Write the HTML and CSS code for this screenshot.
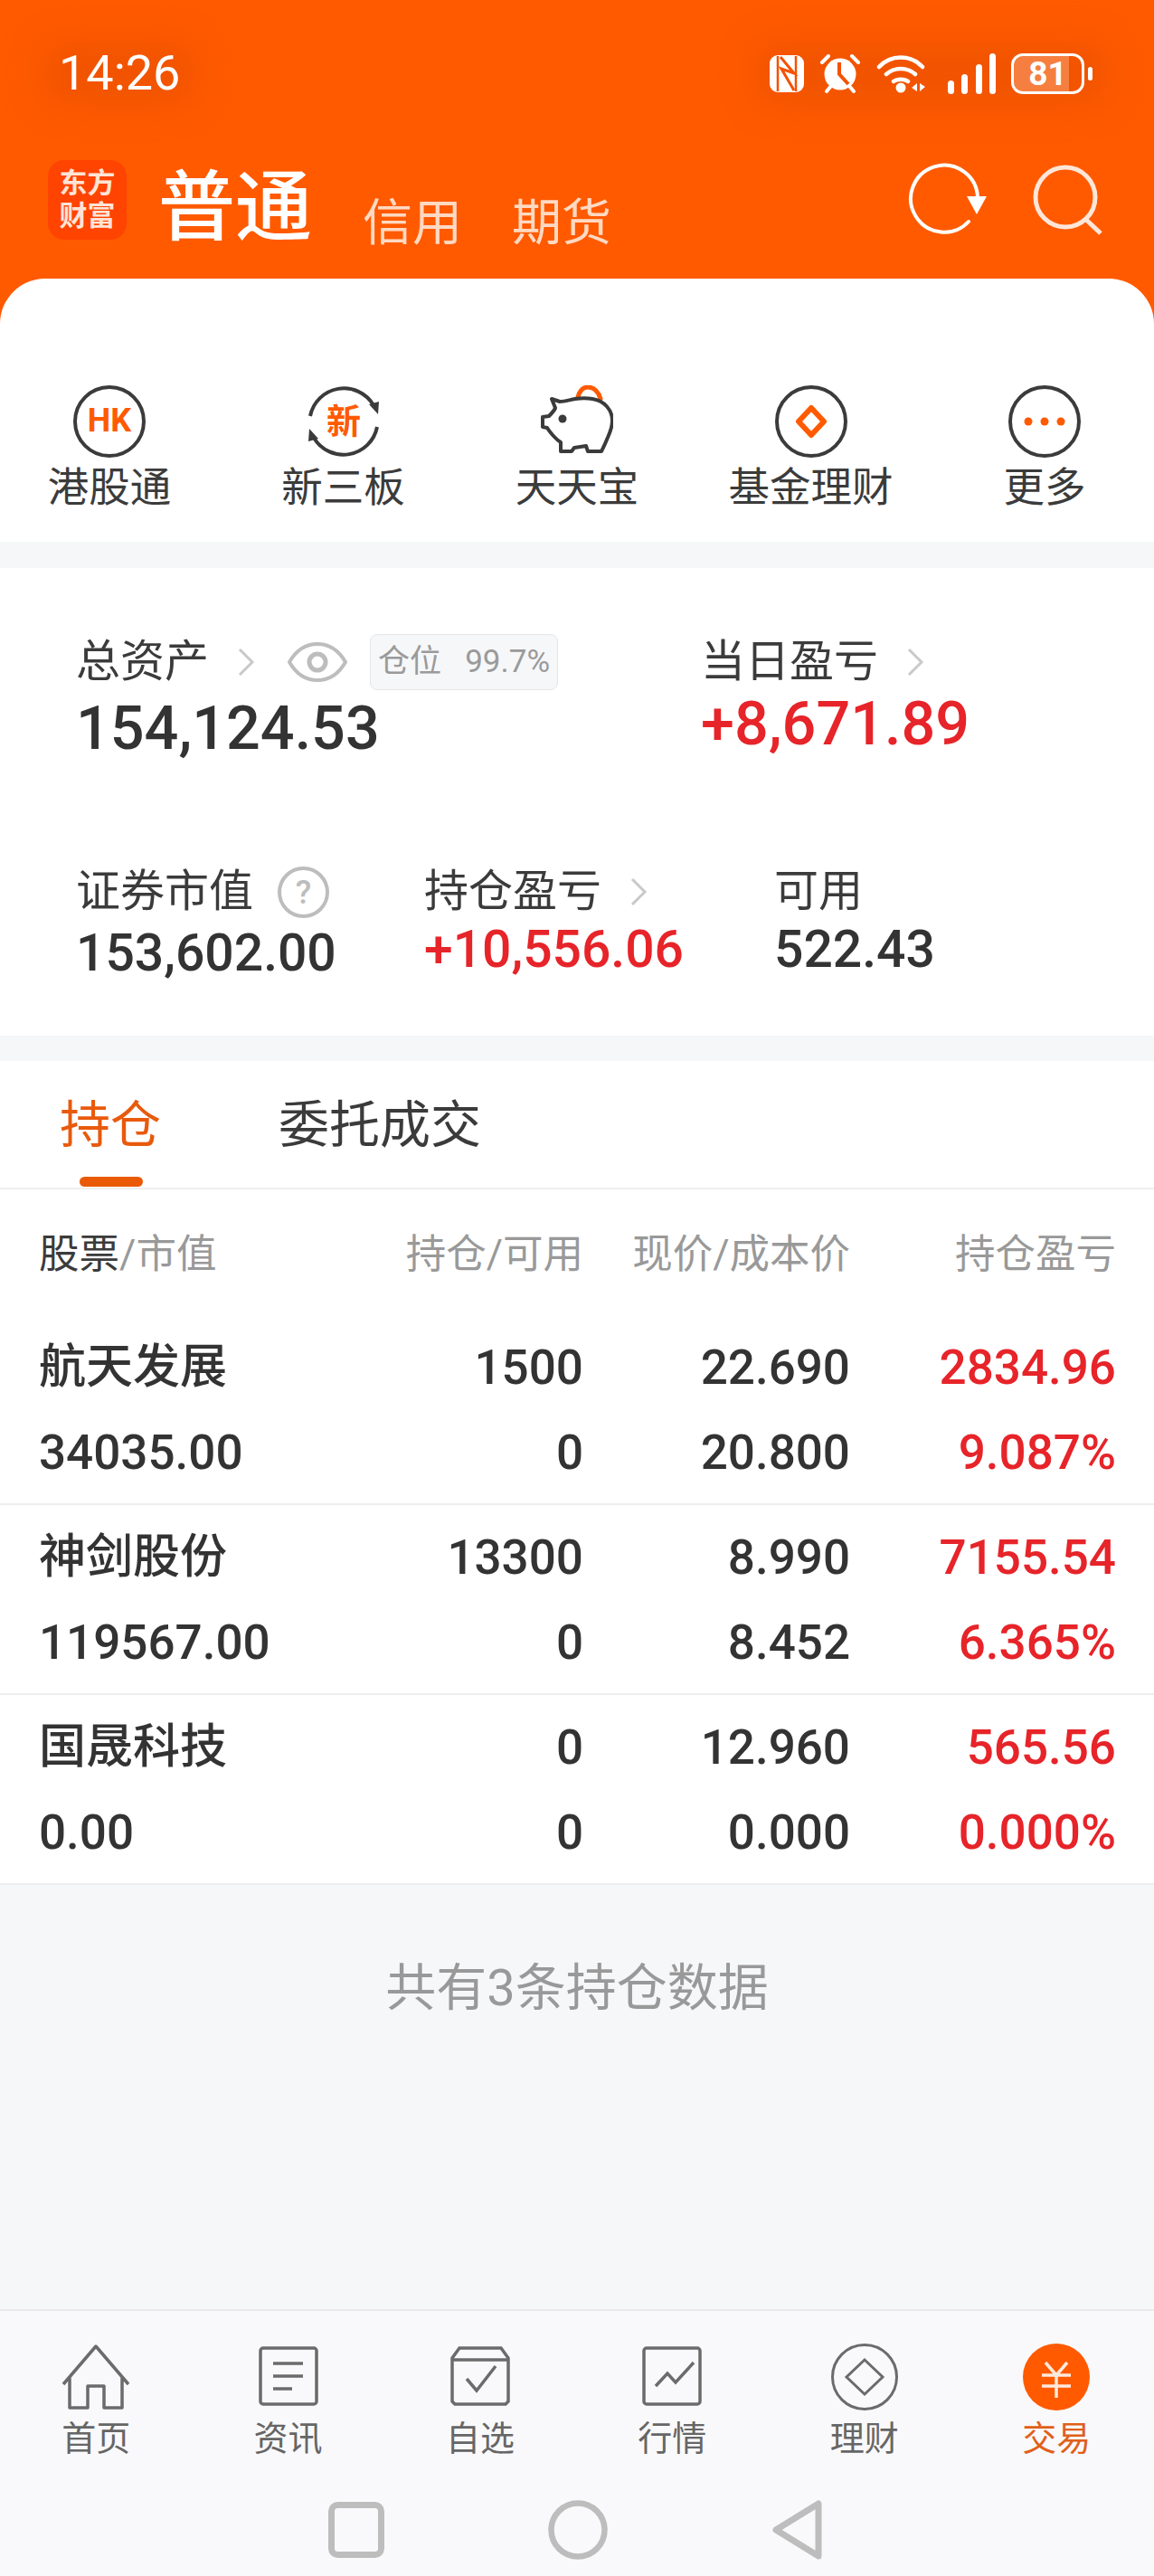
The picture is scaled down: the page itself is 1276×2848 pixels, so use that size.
FILE: index.html
```html
<!DOCTYPE html>
<html lang="zh-CN">
<head>
    <meta charset="UTF-8">
    <title>交易</title>
    <link rel="stylesheet" href="styles.css">
</head>
<body>
    <header class="top">
        <div class="statusbar">
            <span class="clock">14:26</span>
            <div class="status-icons">
                <svg width="38" height="41" viewBox="0 0 38 41"><rect width="38" height="41" rx="9" fill="#fff"/><path d="M9 1v39M29 1v39" stroke="#f35200" stroke-width="2.500"/><path d="M12 2l15 18-14-5 14 24" fill="none" stroke="#f35200" stroke-width="3"/></svg>
                <svg width="46" height="44" viewBox="0 0 46 44"><circle cx="23" cy="23" r="17.500" fill="#fff"/><path d="M22 10v13l10 11" fill="none" stroke="#f35200" stroke-width="4"/><path d="M3 10l7-7M43 10l-7-7M8 42l5-6M38 42l-5-6" stroke="#fff" stroke-width="4" stroke-linecap="round"/></svg>
                <svg class="wifi" width="54" height="44" viewBox="0 0 54 44"><path d="M3 15c13-14 35-14 48 0M11 23c9-8 23-8 32 0M19 31c4-3 12-3 16 0" fill="none" stroke="#fff" stroke-width="4.500" stroke-linecap="round"/><circle cx="27" cy="38" r="5.500" fill="#fff"/><path d="M45 33v9l-6-4zM48 33v9l6-5z" fill="#fff"/></svg>
                <svg width="53" height="45" viewBox="0 0 53 45"><rect x="0" y="30" width="7" height="15" rx="3.500" fill="#fff"/><rect x="15" y="23" width="7" height="22" rx="3.500" fill="#fff"/><rect x="31" y="12" width="7" height="33" rx="3.500" fill="#fff"/><rect x="46" y="0" width="7" height="45" rx="3.500" fill="#fff"/></svg>
                <div class="battery">
                    <div class="battery-body"><span class="battery-fill"></span><span class="battery-num">81</span></div>
                    <span class="battery-tip"></span>
                </div>
            </div>
        </div>
        <div class="titlebar">
            <div class="logo"><span>东方</span><span>财富</span></div>
            <span class="acct-on">普通</span>
            <span class="acct">信用</span>
            <span class="acct acct-last">期货</span>
            <svg class="refresh-icon" width="90" height="80" viewBox="0 0 90 80"><path d="M67 65A37 37 0 1 1 77 38" fill="none" stroke="#fff" stroke-width="4" stroke-linecap="round"/><path d="M65 37h22L76 57z" fill="#fff"/></svg>
            <svg class="search-icon" width="80" height="78" viewBox="0 0 80 78"><circle cx="37" cy="36" r="33" fill="none" stroke="#ffe6d8" stroke-width="5"/><path d="M59 60l17 16" stroke="#ffe6d8" stroke-width="5"/></svg>
        </div>
    </header>

    <section class="shortcuts">
        <div class="shortcut">
            <svg width="80" height="80" viewBox="0 0 80 80"><circle cx="40" cy="40" r="38" fill="none" stroke="#3b3b3b" stroke-width="4"/><text x="40" y="51" text-anchor="middle" class="ic-hk">HK</text></svg>
            <span>港股通</span>
        </div>
        <div class="shortcut">
            <svg width="80" height="80" viewBox="0 0 80 80"><path d="M3 34A38 38 0 0 1 73 22M77 46A38 38 0 0 1 7 58" fill="none" stroke="#3b3b3b" stroke-width="4"/><path d="M68 21l11-3-1 14zM12 59l-11 3 1-14z" fill="#3b3b3b"/><text x="40" y="53" text-anchor="middle" class="ic-xin">新</text></svg>
            <span>新三板</span>
        </div>
        <div class="shortcut">
            <svg width="80" height="80" viewBox="0 0 80 80"><path d="M41 13c2-7 6-11 11-11 7 0 12 6 14 13" fill="none" stroke="#ff5a00" stroke-width="5" stroke-linecap="round"/><path d="M12 15l9 3c5 0 11-2 17-3 7-1 13-1 19 0 13 2 22 12 22 24 0 9-4 16-6 21-2 5-4 9-6 13H52l-2-6-13 2-3 4H22V63C17 60 10 52 7 47l-5-1V35l7-1c3-3 6-6 7-9z" fill="none" stroke="#3b3b3b" stroke-width="4" stroke-linejoin="round"/><circle cx="24" cy="37" r="4.500" fill="#3b3b3b"/></svg>
            <span>天天宝</span>
        </div>
        <div class="shortcut">
            <svg width="80" height="80" viewBox="0 0 80 80"><circle cx="40" cy="40" r="38" fill="none" stroke="#3b3b3b" stroke-width="4"/><path d="M40 25l14 15-14 15-14-15z" fill="none" stroke="#ff5a00" stroke-width="6" stroke-linejoin="round"/></svg>
            <span>基金理财</span>
        </div>
        <div class="shortcut">
            <svg width="80" height="80" viewBox="0 0 80 80"><circle cx="40" cy="40" r="38" fill="none" stroke="#3b3b3b" stroke-width="4"/><circle cx="22" cy="40" r="4.500" fill="#ff5a00"/><circle cx="40" cy="40" r="4.500" fill="#ff5a00"/><circle cx="58" cy="40" r="4.500" fill="#ff5a00"/></svg>
            <span>更多</span>
        </div>
    </section>

    <section class="assets">
        <div class="assets-row">
            <div class="cell cell-total">
                <div class="label">总资产
                    <svg class="chev" width="20" height="32" viewBox="0 0 20 32"><path d="M3 2l14 14L3 30" fill="none" stroke="#c9c9c9" stroke-width="3"/></svg>
                    <svg class="eye" width="66" height="46" viewBox="0 0 66 46"><path d="M2 23C10 9 21 3 33 3s23 6 31 20c-8 14-19 20-31 20S10 37 2 23z" fill="none" stroke="#bdbdbd" stroke-width="4"/><circle cx="33" cy="23" r="9" fill="none" stroke="#bdbdbd" stroke-width="5"/></svg>
                    <span class="tag"><span>仓位</span><span>99.7%</span></span>
                </div>
                <div class="value big low">154,124.53</div>
            </div>
            <div class="cell">
                <div class="label">当日盈亏
                    <svg class="chev" width="20" height="32" viewBox="0 0 20 32"><path d="M3 2l14 14L3 30" fill="none" stroke="#c9c9c9" stroke-width="3"/></svg>
                </div>
                <div class="value big red">+8,671.89</div>
            </div>
        </div>
        <div class="assets-row assets-row-2">
            <div class="cell cell-mkt">
                <div class="label">证券市值
                    <svg class="help" width="57" height="57" viewBox="0 0 57 57"><circle cx="28.500" cy="28.500" r="26.500" fill="none" stroke="#bdbdbd" stroke-width="4"/><text x="28.500" y="41" text-anchor="middle" class="ic-help">?</text></svg>
                </div>
                <div class="value low">153,602.00</div>
            </div>
            <div class="cell cell-pos">
                <div class="label">持仓盈亏
                    <svg class="chev" width="20" height="32" viewBox="0 0 20 32"><path d="M3 2l14 14L3 30" fill="none" stroke="#c9c9c9" stroke-width="3"/></svg>
                </div>
                <div class="value red">+10,556.06</div>
            </div>
            <div class="cell">
                <div class="label">可用</div>
                <div class="value">522.43</div>
            </div>
        </div>
    </section>

    <section class="holdings">
        <div class="tabs">
            <span class="tab tab-on">持仓</span>
            <span class="tab">委托成交</span>
        </div>
        <div class="row row-head">
            <span><b>股票</b>/市值</span>
            <span class="num">持仓/可用</span>
            <span class="num">现价/成本价</span>
            <span class="num">持仓盈亏</span>
        </div>
        <div class="row">
            <span class="name">航天发展</span><span class="num">1500</span><span class="num">22.690</span><span class="num red">2834.96</span>
            <span>34035.00</span><span class="num">0</span><span class="num">20.800</span><span class="num red">9.087%</span>
        </div>
        <div class="row">
            <span class="name">神剑股份</span><span class="num">13300</span><span class="num">8.990</span><span class="num red">7155.54</span>
            <span>119567.00</span><span class="num">0</span><span class="num">8.452</span><span class="num red">6.365%</span>
        </div>
        <div class="row">
            <span class="name">国晟科技</span><span class="num">0</span><span class="num">12.960</span><span class="num red">565.56</span>
            <span>0.00</span><span class="num">0</span><span class="num">0.000</span><span class="num red">0.000%</span>
        </div>
    </section>

    <div class="summary">共有3条持仓数据</div>

    <footer class="bottom">
        <nav class="tabbar">
            <div class="tabbar-item">
                <svg width="76" height="74" viewBox="0 0 76 74"><path d="M2 45L38 3l36 42M9 38v33h20V47h18v24h20V38" fill="none" stroke="#6b6b6b" stroke-width="3.500" stroke-linejoin="round"/></svg>
                <span>首页</span>
            </div>
            <div class="tabbar-item">
                <svg width="76" height="74" viewBox="0 0 76 74"><rect x="7" y="5" width="62" height="62" rx="3" fill="none" stroke="#6b6b6b" stroke-width="3.500"/><path d="M21 22h33M21 36h33M21 50h21" stroke="#6b6b6b" stroke-width="3.500"/></svg>
                <span>资讯</span>
            </div>
            <div class="tabbar-item">
                <svg width="76" height="74" viewBox="0 0 76 74"><path d="M7 16l8-11h46l8 11v48l-3 3H10l-3-3zM7 18h62M23 39l11 13 21-27" fill="none" stroke="#6b6b6b" stroke-width="3.500"/></svg>
                <span>自选</span>
            </div>
            <div class="tabbar-item">
                <svg width="76" height="74" viewBox="0 0 76 74"><rect x="7" y="5" width="62" height="62" rx="3" fill="none" stroke="#6b6b6b" stroke-width="3.500"/><path d="M20 47l13-14 9 10 20-22" fill="none" stroke="#6b6b6b" stroke-width="3.500"/></svg>
                <span>行情</span>
            </div>
            <div class="tabbar-item">
                <svg width="76" height="74" viewBox="0 0 76 74"><circle cx="38" cy="37" r="35.500" fill="none" stroke="#6b6b6b" stroke-width="3"/><path d="M38 18l20 19-20 19-20-19z" fill="none" stroke="#6b6b6b" stroke-width="3"/></svg>
                <span>理财</span>
            </div>
            <div class="tabbar-item tabbar-on">
                <svg width="76" height="74" viewBox="0 0 76 74"><circle cx="38" cy="37" r="37" fill="#ff5a00"/><path d="M26 21l12 14 12-14M22 35h32M22 47h32M38 35v25" fill="none" stroke="#ffe9dc" stroke-width="3.500"/></svg>
                <span>交易</span>
            </div>
        </nav>

        <div class="navkeys">
            <svg width="62" height="62" viewBox="0 0 62 62"><rect x="3.500" y="3.500" width="55" height="55" rx="7" fill="none" stroke="#bdbdbd" stroke-width="7"/></svg>
            <svg width="66" height="66" viewBox="0 0 66 66"><circle cx="33" cy="33" r="29.500" fill="none" stroke="#bdbdbd" stroke-width="6.500"/></svg>
            <svg width="58" height="68" viewBox="0 0 58 68"><path d="M52 5v58L5 34z" fill="none" stroke="#bdbdbd" stroke-width="7" stroke-linejoin="round"/></svg>
        </div>
    </footer>
</body>
</html>
```

FILE: styles.css
```css
/* page */
* {
    box-sizing: border-box;
}
body {
    display: flex;
    flex-direction: column;
    margin: 0;
    width: 1276px;
    height: 2848px;
    overflow: hidden;
    background-color: #f6f7f9;
    font-family: Roboto, "Noto Sans CJK SC", sans-serif;
    color: #333;
}
svg {
    display: block;
    flex: none;
}

/* orange header */
.top {
    flex: none;
    height: 358px;
    padding-top: 58px;
    background-color: #ff5a00;
    color: #fff;
}
.statusbar {
    display: flex;
    justify-content: space-between;
    align-items: center;
    height: 46px;
    padding: 0 68px 0 65px;
}
.clock {
    position: relative;
    isolation: isolate;
    font-size: 54px;
    line-height: 46px;
}
.status-icons {
    position: relative;
    display: flex;
    align-items: center;
    gap: 17px;
}
/* soft dark glow the system draws behind the status bar */
.clock::before,
.status-icons::before {
    content: "";
    position: absolute;
    left: -15px;
    right: -15px;
    top: -10px;
    bottom: -10px;
    background-color: #e04c00;
    opacity: 0.5;
    filter: blur(22px);
}
.clock::before {
    z-index: -1;
}
.status-icons > * {
    position: relative;
}
.wifi {
    margin-right: 8px;
}
.battery {
    display: flex;
    align-items: center;
    gap: 4px;
}
.battery-body {
    position: relative;
    width: 81px;
    height: 45px;
    border: 3px solid #fff;
    border-radius: 13px;
    overflow: hidden;
    text-align: center;
    font-size: 37px;
    line-height: 39px;
    font-weight: 700;
}
.battery-fill {
    position: absolute;
    left: 0;
    top: 0;
    bottom: 0;
    width: 81%;
    background-color: rgba(255, 255, 255, 0.25);
}
.battery-num {
    position: relative;
}
.battery-tip {
    width: 5px;
    height: 15px;
    border-radius: 3px;
    background-color: #fff;
}
.titlebar {
    display: flex;
    align-items: flex-end;
    height: 90px;
    margin-top: 73px;
    padding-left: 53px;
}
.logo {
    display: flex;
    flex-direction: column;
    justify-content: center;
    align-items: center;
    width: 87px;
    height: 88px;
    margin-bottom: 2px;
    border-radius: 18px;
    background-color: #ff4300;
    font-size: 31px;
    line-height: 36px;
    font-weight: 700;
    color: #ffe4d6;
}
.acct-on {
    margin-left: 35px;
    margin-bottom: -8px;
    font-size: 85px;
    line-height: 90px;
    font-weight: 500;
}
.acct {
    margin-left: 56px;
    margin-bottom: -10px;
    font-size: 55px;
    line-height: 62px;
    color: #ffd9c2;
}
.acct-last {
    margin-left: 55px;
}
.refresh-icon {
    margin: 0 0 7px auto;
}
.search-icon {
    margin: 0 55px 7px 47px;
}

/* shortcut row, overlaps the header */
.shortcuts {
    flex: none;
    display: grid;
    grid-template-columns: repeat(5, 258.500px);
    justify-content: center;
    height: 291px;
    margin-top: -50px;
    padding-top: 118px;
    border-radius: 50px 50px 0 0;
    background-color: #fff;
}
.shortcut {
    display: flex;
    flex-direction: column;
    align-items: center;
    font-size: 45.500px;
    line-height: 68px;
    color: #3b3b3b;
}

/* asset summary */
.assets {
    flex: none;
    height: 517px;
    margin-top: 29px;
    padding: 77px 0 0 84px;
    background-color: #fff;
}
.assets-row {
    display: grid;
    grid-template-columns: 691px 1fr;
}
.assets-row-2 {
    grid-template-columns: 385px 387px 1fr;
    margin-top: 120px;
}
.label {
    display: flex;
    align-items: center;
    height: 54px;
    font-size: 49px;
    line-height: 54px;
    color: #3b3b3b;
}
.label .chev {
    margin-left: 31px;
}
.eye {
    margin-left: 36px;
}
.help {
    margin-left: 27px;
}
.tag {
    display: flex;
    justify-content: space-between;
    align-items: center;
    width: 208px;
    height: 62px;
    margin-left: 25px;
    padding: 0 8px;
    border: 1px solid #e6e6e6;
    border-radius: 8px;
    background-color: #f6f7f9;
    font-size: 35px;
    color: #9a9a9a;
}
.value {
    margin-top: 3px;
    font-size: 57px;
    line-height: 68px;
    font-weight: 500;
}
.low {
    margin-top: 7px;
}
.big {
    font-size: 66.500px;
}
.big.low {
    margin-top: 12px;
}
.big.red {
    margin-top: 7px;
}
.red {
    color: #e62429;
}
.ic-hk {
    font: 700 36px Roboto, sans-serif;
    fill: #ff5a00;
}
.ic-xin {
    font: 700 38px "Noto Sans CJK SC", sans-serif;
    fill: #ff5a00;
}
.ic-help {
    font: 500 36px Roboto, sans-serif;
    fill: #bdbdbd;
}

/* positions table */
.holdings {
    flex: none;
    margin-top: 28px;
    background-color: #fff;
}
.tabs {
    display: flex;
    height: 142px;
    padding-left: 66px;
    border-bottom: 2px solid #eee;
    font-size: 56px;
    line-height: 142px;
}
.tab {
    position: relative;
    margin-right: 130px;
    color: #3b3b3b;
}
.tab-on {
    color: #e85a0c;
}
.tab-on::after {
    content: "";
    position: absolute;
    left: 22px;
    bottom: 1px;
    width: 70px;
    height: 11px;
    border-radius: 6px;
    background-color: #ea5a06;
}
.row {
    display: grid;
    grid-template-columns: 400px 202px 295px 294px;
    grid-auto-rows: 94px;
    align-items: center;
    height: 210px;
    padding: 11px 42px 0 43px;
    border-bottom: 2px solid #eee;
    font-size: 53px;
    font-weight: 500;
    color: #333;
}
.row-head {
    grid-auto-rows: 134px;
    height: 139px;
    padding-top: 0;
    border-bottom: 0;
    font-size: 44.500px;
    font-weight: 400;
    color: #999;
}
.row-head b {
    font-weight: 400;
    color: #3b3b3b;
}
.num {
    text-align: right;
    white-space: nowrap;
}
.name {
    margin-bottom: 11px;
    font-size: 52px;
}

.summary {
    flex: none;
    padding-top: 79px;
    text-align: center;
    font-size: 56px;
    line-height: 70px;
    color: #999;
}

/* bottom bar */
.bottom {
    flex: none;
    height: 295px;
    margin-top: auto;
    padding-top: 36px;
    border-top: 2px solid #e9e9eb;
    background-color: #f9f9fb;
}
.tabbar {
    display: grid;
    grid-template-columns: repeat(6, 212.400px);
}
.tabbar-item {
    display: flex;
    flex-direction: column;
    align-items: center;
    font-size: 38px;
    line-height: 62px;
    color: #666;
}
.tabbar-on {
    color: #e0601a;
}
.navkeys {
    display: flex;
    justify-content: center;
    align-items: center;
    gap: 181px;
    margin-top: 36px;
    padding-right: 3px;
}
```
